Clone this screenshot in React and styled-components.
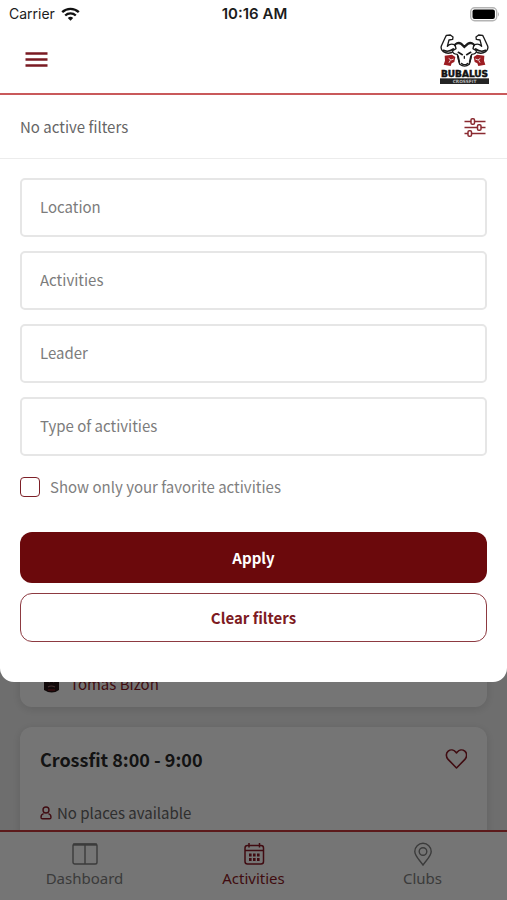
import React, { useState } from "react";
import styled, { createGlobalStyle } from "styled-components";

const GlobalStyle = createGlobalStyle`
  * {
    box-sizing: border-box;
  }
  body {
    margin: 0;
    background-color: #ffffff;
    font-family: "Noto Sans CJK SC", "Noto Sans", sans-serif;
    font-size: 15px;
    line-height: 24px;
    color: #666666;
  }
  button,
  input {
    font: inherit;
  }
`;

const Screen = styled.div`
  position: relative;
  display: flex;
  flex-direction: column;
  height: 100vh;
  overflow: hidden;
`;

const Shade = styled.div`
  position: absolute;
  inset: 0;
  z-index: 1;
  background-color: rgba(0, 0, 0, 0.54);
`;

const Sheet = styled.div`
  position: relative;
  z-index: 2;
  flex-shrink: 0;
  padding-bottom: 40px;
  background-color: #ffffff;
  border-radius: 0 0 14px 14px;
`;

const StatusBar = styled.div`
  display: grid;
  grid-template-columns: 1fr auto 1fr;
  align-items: center;
  height: 28px;
  padding: 0 7px 0 9px;
  font-family: Inter, "Liberation Sans", sans-serif;
  font-size: 15px;
  line-height: 20px;
  color: #1c1c1c;
`;

const Carrier = styled.span`
  display: flex;
  align-items: center;
  gap: 6px;
  font-size: 14px;
`;

const Clock = styled.span`
  font-weight: 600;
`;

const Battery = styled.svg`
  justify-self: end;
`;

const Header = styled.header`
  display: flex;
  align-items: center;
  justify-content: space-between;
  height: 67px;
  padding: 0 18px 4px 20px;
  border-bottom: 2px solid #c9595b;
`;

const IconButton = styled.button`
  display: flex;
  padding: 0;
  border: none;
  background: none;
  color: ${(props) => props.$color || "#7a1a22"};
  cursor: pointer;
`;

const FilterBar = styled.div`
  display: flex;
  align-items: center;
  justify-content: space-between;
  height: 64px;
  padding: 0 20px;
  border-bottom: 1px solid #ececec;
`;

const Form = styled.form`
  display: flex;
  flex-direction: column;
  padding: 19px 20px 0;
`;

const Fields = styled.div`
  display: flex;
  flex-direction: column;
  gap: 14px;
`;

const Field = styled.input`
  width: 100%;
  height: 59px;
  padding: 0 18px 2px;
  border: 2px solid #e6e6e6;
  border-radius: 5px;
  background-color: #ffffff;
  color: #666666;
  outline-color: #6b090c;
  &::placeholder {
    color: #7c7c7c;
    opacity: 1;
  }
`;

const CheckLabel = styled.label`
  display: flex;
  align-items: center;
  gap: 10px;
  margin: 19px 0 33px;
  color: #808080;
`;

const CheckBox = styled.input`
  appearance: none;
  width: 20px;
  height: 20px;
  margin: 0;
  border: 1px solid #7d2028;
  border-radius: 4px;
  background-color: #ffffff;
  &:checked {
    background-color: #6b090c;
  }
`;

const Button = styled.button`
  height: ${(props) => (props.$outline ? "49px" : "51px")};
  margin-bottom: ${(props) => (props.$outline ? "0" : "10px")};
  border: ${(props) => (props.$outline ? "1px solid #8d3a41" : "none")};
  border-radius: 12px;
  background-color: ${(props) => (props.$outline ? "#ffffff" : "#6b090c")};
  color: ${(props) => (props.$outline ? "#7d1a22" : "#ffffff")};
  font-weight: 700;
  cursor: pointer;
`;

const Feed = styled.main`
  display: flex;
  flex: 1;
  flex-direction: column;
  gap: 20px;
  min-height: 0;
  margin-top: -50px;
  padding: 0 20px;
  overflow: hidden;
  background-color: #f0f0f0;
`;

const Card = styled.article`
  flex-shrink: 0;
  padding: 20px;
  border-radius: 12px;
  background-color: #ffffff;
  box-shadow: 0 2px 10px rgba(0, 0, 0, 0.12);
`;

const LeaderRow = styled.div`
  display: flex;
  align-items: center;
  gap: 10px;
  padding: 20px 3px 0;
  margin-bottom: -9px;
  color: #8c1a26;
`;

const CardHead = styled.div`
  display: flex;
  align-items: center;
  justify-content: space-between;
  margin-bottom: 30px;
`;

const CardTitle = styled.h2`
  margin: 0;
  font-size: 18px;
  font-weight: 700;
  line-height: 24px;
  color: #2b2b2b;
`;

const Places = styled.p`
  display: flex;
  align-items: center;
  gap: 5px;
  margin: 0 0 20px;
`;

const Nav = styled.nav`
  display: grid;
  grid-template-columns: repeat(3, 1fr);
  flex-shrink: 0;
  height: 70px;
  border-top: 2px solid #c9393b;
  background-color: #ffffff;
`;

const NavLink = styled.a`
  display: flex;
  flex-direction: column;
  align-items: center;
  padding-top: 10px;
  font-family: "Noto Sans", "Open Sans", sans-serif;
  font-size: 15px;
  line-height: 24px;
  text-decoration: none;
  color: ${(props) => (props.$active ? "#8c1a26" : "#808080")};
`;

const WifiIcon = () => (
  <svg width="19" height="14" viewBox="0 0 19 14" aria-hidden="true">
    <path d="M1.2 5.2a12 12 0 0 1 16.6 0" fill="none" stroke="#111" strokeWidth="2.4" />
    <path d="M4.2 8.5a7.6 7.6 0 0 1 10.6 0" fill="none" stroke="#111" strokeWidth="2.3" />
    <path d="M6.8 11a3.9 3.9 0 0 1 5.4 0L9.5 13.8z" fill="#111" />
  </svg>
);

const MenuIcon = () => (
  <svg width="32" height="32" viewBox="0 0 32 32" aria-hidden="true">
    <path d="M5.500 10.500h22M5.500 16.500h22M5.500 22.500h22" stroke="currentColor" strokeWidth="2.400" />
  </svg>
);

const SlidersIcon = () => (
  <svg width="24" height="24" viewBox="0 0 24 24" fill="none" stroke="currentColor" strokeWidth="1.500" aria-hidden="true">
    <path d="M1.500 6.500H8M11.500 6.500h11M1.500 12.500h13M18 12.500h4.500M1.500 18.500H5M8.500 18.500h14" />
    <rect x="8" y="3.700" width="3.500" height="5.600" rx="1.300" />
    <rect x="14.500" y="9.700" width="3.500" height="5.600" rx="1.300" />
    <rect x="5" y="15.700" width="3.500" height="5.600" rx="1.300" />
  </svg>
);

const HeartIcon = () => (
  <svg width="24" height="24" viewBox="-2 1 24 24" fill="none" stroke="currentColor" strokeWidth="1.600" strokeLinejoin="round" aria-hidden="true">
    <path d="M12 21.500L3.600 12.900C1.200 10.300 1.300 6.500 3.700 4.600 6.200 2.700 9.400 3.300 11.200 5.400l.8 1 .8-1c1.800-2.100 5-2.700 7.500-.8 2.400 1.900 2.500 5.700.1 8.300z" transform="translate(-0.500 0.500)" />
  </svg>
);

const PersonIcon = () => (
  <svg width="12" height="14" viewBox="0 0 12 14" fill="none" stroke="#8c1a26" strokeWidth="1.400" aria-hidden="true">
    <circle cx="6" cy="4" r="3" />
    <path d="M3.600 7.600C1.700 8.200 1 9.600 1 11.200c0 1.100.5 1.600 1.500 1.600h7c1 0 1.500-.5 1.500-1.600 0-1.600-.7-3-2.600-3.600" />
  </svg>
);

const DashboardIcon = () => (
  <svg width="26" height="24" viewBox="0 0 26 24" fill="none" stroke="currentColor" strokeWidth="1.400" aria-hidden="true">
    <rect x="1" y="2" width="24" height="20" rx="1.800" />
    <path d="M1 2.600h24" strokeWidth="2.200" />
    <path d="M13 2v20" />
  </svg>
);

const CalendarIcon = () => (
  <svg width="24" height="24" viewBox="0 0 24 24" fill="none" stroke="currentColor" strokeWidth="1.500" aria-hidden="true">
    <rect x="3" y="3.500" width="18.500" height="18.500" rx="2.500" />
    <path d="M3 8.500h18.500M7 1v4.500M17.500 1v4.500" />
    <path d="M7 13h2.600M11 13h2.600M15 13h2.600M7 17.500h2.600M11 17.500h2.600M15 17.500h2.600" strokeWidth="2.800" />
  </svg>
);

const PinIcon = () => (
  <svg width="24" height="24" viewBox="0 0 24 24" fill="none" stroke="currentColor" strokeWidth="1.400" aria-hidden="true">
    <path d="M12 23C8 17.500 3.800 13.800 3.800 9.500a8.200 8.200 0 0 1 16.400 0c0 4.300-4.200 8-8.200 13.500z" />
    <circle cx="12" cy="9.500" r="3.800" />
  </svg>
);

const Avatar = () => (
  <svg width="17" height="20" viewBox="0 0 17 20" aria-hidden="true">
    <path d="M1 3Q8 0 16 3v13q-7 5-15 0z" fill="#251416" />
    <path d="M4 7l3 1M13 7l-3 1M5 13q3-2 7 0" stroke="#9a6c6e" strokeWidth="1.200" fill="none" />
    <path d="M5 16h7" stroke="#7a1a22" strokeWidth="1.500" />
  </svg>
);

const Logo = () => (
  <svg width="49" height="50" viewBox="0 0 147 150" role="img" aria-label="Bubalus Crossfit">
    <g fill="#ffffff" stroke="#1b1b1b" strokeWidth="4" strokeLinejoin="round" strokeLinecap="round">
      <path d="M39 9L31 3 19 4 15 12 4 36Q1 46 10 53 25 63 42 52L51 44 43 32Q31 27 22 37L27 18 38 16z" />
      <path d="M108 9L116 3 128 4 132 12 143 36Q146 46 137 53 122 63 105 52L96 44 104 32Q116 27 125 37L120 18 109 16z" />
      <path d="M45 31Q54 22 64 28L73 37 83 28Q93 22 102 31L99 44 109 50Q110 60 95 61L92 76 88 91Q74 102 59 91L55 76 52 61Q37 60 38 50L48 44z" />
    </g>
    <g fill="none" stroke="#1b1b1b" strokeWidth="5" strokeLinecap="round">
      <path d="M44 33Q54 25 64 31L73 40 83 31Q93 25 103 33" />
      <path d="M10 49Q25 56 40 45M137 49Q122 56 107 45" />
      <path d="M55 55L67 62M92 55L80 62M54 66L58 84M93 66L89 84" />
      <path d="M64 88L70 92H78L84 88M73 67V73" strokeWidth="4" />
    </g>
    <g fill="#9c1d22">
      <path d="M14 65L36 62 46 69 43 84 35 88 32 96 11 92 15 80z" />
      <path d="M133 65L111 62 101 69 104 84 112 88 115 96 136 92 132 80z" />
    </g>
    <path d="M26 73l7 5 8-3M31 79l-4 7M121 73l-7 5-8-3M116 79l4 7" fill="none" stroke="#ffffff" strokeWidth="2.500" />
    <text x="73.500" y="128" textAnchor="middle" fontFamily="DejaVu Sans" fontWeight="700" fontSize="27" fill="#111" stroke="#111" strokeWidth="1.500">
      BUBALUS
    </text>
    <rect x="0" y="133" width="147" height="17" fill="#242424" />
    <text x="73.500" y="146" textAnchor="middle" fontFamily="DejaVu Sans" fontWeight="700" fontSize="13" fill="#b5b5b5">
      CROSSFIT
    </text>
  </svg>
);

const fields = ["Location", "Activities", "Leader", "Type of activities"];

const tabs = [
  { name: "Dashboard", icon: <DashboardIcon /> },
  { name: "Activities", icon: <CalendarIcon />, active: true },
  { name: "Clubs", icon: <PinIcon /> },
];

const App = () => {
  const [values, setValues] = useState({});
  const [favorite, setFavorite] = useState(false);

  const clearFilters = () => {
    setValues({});
    setFavorite(false);
  };

  return (
    <>
      <GlobalStyle />
      <Screen>
        <Sheet>
          <StatusBar>
            <Carrier>
              Carrier
              <WifiIcon />
            </Carrier>
            <Clock>10:16 AM</Clock>
            <Battery width="30" height="15" viewBox="0 0 30 15" aria-hidden="true">
              <rect x="0.700" y="0.700" width="26" height="13" rx="4" fill="#fff" stroke="#b4b4b4" strokeWidth="1.400" />
              <rect x="2.500" y="2.500" width="22.400" height="9.400" rx="2" fill="#000" />
              <path d="M28 5q2 2.300 0 4.600z" fill="#b4b4b4" />
            </Battery>
          </StatusBar>
          <Header>
            <IconButton type="button" aria-label="Menu">
              <MenuIcon />
            </IconButton>
            <Logo />
          </Header>
          <FilterBar>
            <span>No active filters</span>
            <IconButton type="button" aria-label="Filters" $color="#8a2a31">
              <SlidersIcon />
            </IconButton>
          </FilterBar>
          <Form
            onSubmit={(e) => {
              e.preventDefault();
            }}>
            <Fields>
              {fields.map((name) => (
                <Field
                  key={name}
                  type="text"
                  aria-label={name}
                  placeholder={name}
                  value={values[name] || ""}
                  onChange={(e) => setValues({ ...values, [name]: e.target.value })}
                />
              ))}
            </Fields>
            <CheckLabel>
              <CheckBox
                type="checkbox"
                checked={favorite}
                onChange={(e) => setFavorite(e.target.checked)}
              />
              Show only your favorite activities
            </CheckLabel>
            <Button type="submit">Apply</Button>
            <Button type="button" $outline onClick={clearFilters}>
              Clear filters
            </Button>
          </Form>
        </Sheet>

        <Feed>
          <Card>
            <LeaderRow>
              <Avatar />
              Tomas Bizon
            </LeaderRow>
          </Card>
          <Card>
            <CardHead>
              <CardTitle>Crossfit 8:00 - 9:00</CardTitle>
              <IconButton type="button" aria-label="Favorite" $color="#8c1a26">
                <HeartIcon />
              </IconButton>
            </CardHead>
            <Places>
              <PersonIcon />
              No places available
            </Places>
          </Card>
        </Feed>

        <Nav>
          {tabs.map((tab) => (
            <NavLink key={tab.name} href="#" $active={tab.active}>
              {tab.icon}
              {tab.name}
            </NavLink>
          ))}
        </Nav>
        <Shade />
      </Screen>
    </>
  );
};

export default App;
